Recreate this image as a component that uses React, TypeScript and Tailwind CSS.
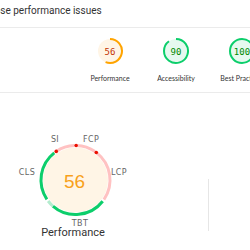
import React from "react";

function polar(cx: number, cy: number, r: number, deg: number): [number, number] {
  const a = ((deg - 90) * Math.PI) / 180;
  return [cx + r * Math.cos(a), cy + r * Math.sin(a)];
}

function arc(cx: number, cy: number, r: number, a0: number, a1: number) {
  const [x0, y0] = polar(cx, cy, r, a0);
  const [x1, y1] = polar(cx, cy, r, a1);
  const large = a1 - a0 > 180 ? 1 : 0;
  return `M ${x0.toFixed(2)} ${y0.toFixed(2)} A ${r} ${r} 0 ${large} 1 ${x1.toFixed(2)} ${y1.toFixed(2)}`;
}

type SG = { score: number; color: string; fill: string; text: string; label: string };

function SmallGauge({ score, color, fill, text, label }: SG) {
  return (
    <div className="flex w-[66px] shrink-0 flex-col items-center">
      <svg width="28" height="28" viewBox="0 0 28 28">
        <circle cx="14" cy="14" r="12" fill={fill} />
        {score >= 100 ? (
          <circle cx="14" cy="14" r="12" fill="none" stroke={color} strokeWidth="2" />
        ) : (
          <path d={arc(14, 14, 12, 0, score * 3.6)} fill="none" stroke={color} strokeWidth="2" />
        )}
        <text
          x="14"
          y="14.5"
          textAnchor="middle"
          dominantBaseline="central"
          fontSize="9"
          fontFamily="'DejaVu Sans Mono', monospace"
          fill={text}
        >
          {score}
        </text>
      </svg>
      <div className="mt-[8px] whitespace-nowrap font-['Lato',sans-serif] text-[7px] leading-[10px] text-[#333]">
        {label}
      </div>
    </div>
  );
}

const CX = 75.5;
const CY = 50;
const R = 34.5;
const GREEN = "#0cce6b";
const LGREEN = "#b3ecce";
const PINK = "#ffc2c2";
const RED = "#eb0f00";

function BigGauge() {
  const segs: { a0: number; a1: number; c: string }[] = [
    { a0: 2, a1: 34.5, c: PINK },
    { a0: 38, a1: 124.5, c: PINK },
    { a0: 128, a1: 221, c: GREEN },
    { a0: 221, a1: 232.5, c: LGREEN },
    { a0: 236, a1: 322, c: GREEN },
    { a0: 326, a1: 358, c: PINK },
  ];
  const dots = [1, 37, 326];
  const labels = [
    { t: "SI", x: 55, y: 9 },
    { t: "FCP", x: 91, y: 9 },
    { t: "LCP", x: 119, y: 42 },
    { t: "CLS", x: 27, y: 42 },
    { t: "TBT", x: 80, y: 93 },
  ];
  return (
    <svg width="150" height="97" viewBox="0 0 150 97">
      <circle cx={CX} cy={CY} r={32.5} fill="#fff5e6" />
      {segs.map((s, i) => (
        <path key={i} d={arc(CX, CY, R, s.a0, s.a1)} fill="none" stroke={s.c} strokeWidth="3" />
      ))}
      {dots.map((d, i) => {
        const [x, y] = polar(CX, CY, R, d);
        return <circle key={i} cx={x} cy={y} r="1.8" fill={RED} />;
      })}
      {labels.map((l) => (
        <text
          key={l.t}
          x={l.x}
          y={l.y}
          textAnchor="middle"
          dominantBaseline="central"
          fontSize="8"
          letterSpacing="0.4"
          fontFamily="'DejaVu Sans', sans-serif"
          fill="#666"
        >
          {l.t}
        </text>
      ))}
      <text
        x={CX - 1}
        y={CY + 1}
        textAnchor="middle"
        dominantBaseline="central"
        fontSize="19"
        fontFamily="'Liberation Sans', Arial, sans-serif"
        fill="#f8a11b"
      >
        56
      </text>
    </svg>
  );
}

export default function App() {
  return (
    <div className="h-[250px] w-[250px] overflow-hidden bg-white">
      <div className="h-[28px] border-b border-[#ebebeb] pt-[4px]">
        <div className="-ml-[31px] whitespace-nowrap font-['Roboto',sans-serif] text-[10px] leading-[14px] text-[#333]">
          Diagnose performance issues
        </div>
      </div>
      <div className="flex h-[65px] border-b border-[#ebebeb] pl-[77px] pt-[9px]">
        <SmallGauge score={56} color="#ffa400" fill="#fff5e6" text="#c33300" label="Performance" />
        <SmallGauge score={90} color="#0cce6b" fill="#e6f9ef" text="#008800" label="Accessibility" />
        <SmallGauge score={100} color="#0cce6b" fill="#e6f9ef" text="#008800" label="Best Practices" />
      </div>
      <div className="flex pt-[37px]">
        <div className="flex w-[150px] shrink-0 flex-col items-center">
          <BigGauge />
          <div className="whitespace-nowrap pr-[4px] font-['Roboto',sans-serif] text-[11px] leading-[12px] text-[#333]">
            Performance
          </div>
        </div>
        <div className="ml-[58px] mt-[49px] h-[52px] w-px shrink-0 bg-[#e6e6e6]" />
      </div>
    </div>
  );
}
